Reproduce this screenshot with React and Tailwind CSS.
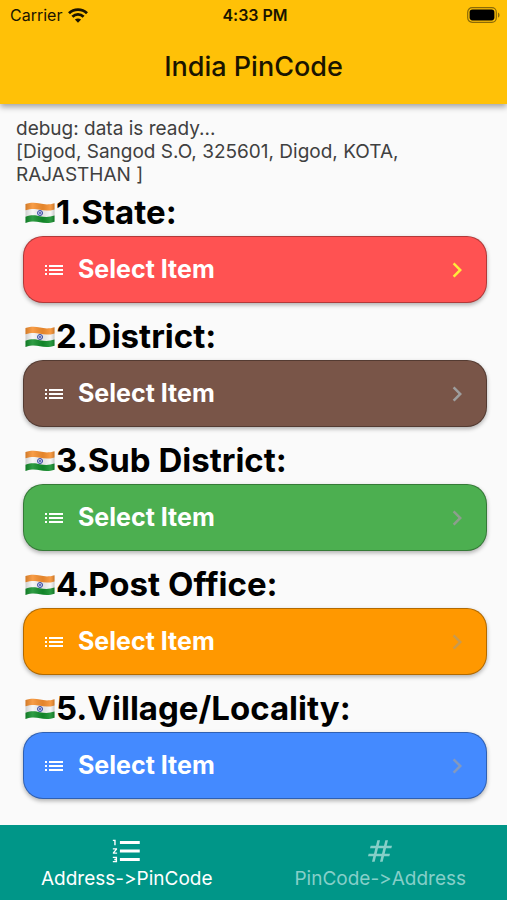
import { useState } from 'react';
import { MdChevronRight, MdFormatListNumbered, MdList, MdNumbers } from 'react-icons/md';

const fields = [
  { id: 'state', label: '1.State:', color: 'bg-[#ff5252]', arrow: 'text-[#ffeb3b]' },
  { id: 'district', label: '2.District:', color: 'bg-[#795548]', arrow: 'text-[#9e9e9e]' },
  { id: 'sub-district', label: '3.Sub District:', color: 'bg-[#4caf50]', arrow: 'text-[#8d9e8e]' },
  { id: 'post-office', label: '4.Post Office:', color: 'bg-[#ff9800]', arrow: 'text-[#c99a4f]' },
  { id: 'village', label: '5.Village/Locality:', color: 'bg-[#448aff]', arrow: 'text-[#8499bd]' },
];

const tabs = [
  { id: 'address', label: 'Address->PinCode', Icon: MdFormatListNumbered, size: 'size-[34px]' },
  { id: 'pincode', label: 'PinCode->Address', Icon: MdNumbers, size: 'size-8' },
];

function WifiIcon() {
  return (
    <svg viewBox="0 0 20 15" className="w-5 h-[15px]" fill="none" stroke="#1a1400" strokeWidth="2.8">
      <path d="M1 5.2C6 .4 14 .4 19 5.2" />
      <path d="M4.4 8.7c3.2-3 8-3 11.2 0" />
      <path d="M10 14.8 6.9 11.6c1.8-1.6 4.4-1.6 6.2 0z" fill="#1a1400" stroke="none" />
    </svg>
  );
}

function BatteryIcon() {
  return (
    <svg viewBox="0 0 33 16" className="w-[33px] h-4">
      <rect x="0.7" y="0.7" width="28.6" height="14.6" rx="4.5" fill="none" stroke="#8a6a08" strokeWidth="1.2" />
      <rect x="2.6" y="2.6" width="24.8" height="10.8" rx="2.8" fill="#000" />
      <path d="M31 5.4c2 .8 2 4.4 0 5.2z" fill="#8a6a08" />
    </svg>
  );
}

function IndiaFlag() {
  return (
    <svg viewBox="0 0 30 22" className="w-[30px] h-[22px] shrink-0">
      <defs>
        <linearGradient id="flagShade" x1="0" x2="1" y1="0" y2="0">
          <stop offset="0" stopColor="#000" stopOpacity="0.16" />
          <stop offset="0.25" stopColor="#fff" stopOpacity="0.12" />
          <stop offset="0.6" stopColor="#000" stopOpacity="0.08" />
          <stop offset="0.85" stopColor="#fff" stopOpacity="0.1" />
          <stop offset="1" stopColor="#000" stopOpacity="0.2" />
        </linearGradient>
      </defs>
      <path d="M.5 2C7 0 11 .8 15 1.600s9 1.400 14.500-.4v18.600c-6 2-10.500 1.200-14.500.4S6.500 18.800.5 21z" fill="#f5f5f5" />
      <path d="M.5 2C7 0 11 .8 15 1.600s9 1.400 14.500-.4v6.200c-5.500 1.800-10.500 1.200-14.500.4S7 6 .5 8.300z" fill="#f7902f" />
      <path d="M.5 14.700C7 12.300 11 13.400 15 14.200s9 1.200 14.500-.6v6.200c-6 2-10.500 1.200-14.500.4S6.500 18.800.5 21z" fill="#138f2b" />
      <circle cx="15" cy="11" r="2.500" fill="#d3d8f2" stroke="#3447ad" strokeWidth="1" />
      <circle cx="15" cy="11" r="0.900" fill="#3447ad" />
      <path d="M.5 2C7 0 11 .8 15 1.600s9 1.400 14.500-.4v18.600c-6 2-10.500 1.200-14.500.4S6.500 18.800.5 21z" fill="url(#flagShade)" />
    </svg>
  );
}

function SelectField({ id, label, color, arrow }) {
  return (
    <div className="flex flex-col gap-[3px]">
      <label htmlFor={id} className="flex items-center gap-px h-10 pl-0.5 text-[33px] font-bold text-black">
        <IndiaFlag />
        {label}
      </label>
      <div
        className={`flex items-center h-[67px] pl-[18px] pr-[14px] rounded-[20px] border border-black/30 shadow-[0_2px_4px_rgba(0,0,0,0.3)] ${color}`}
      >
        <MdList className="size-6 shrink-0 text-white" />
        <select
          id={id}
          className="appearance-none flex-1 min-w-0 ml-3 h-full bg-transparent text-[25px] font-bold text-white outline-none"
        >
          <option>Select Item</option>
        </select>
        <MdChevronRight className={`size-[30px] shrink-0 ${arrow}`} />
      </div>
    </div>
  );
}

function App() {
  const [activeTab, setActiveTab] = useState('address');

  return (
    <div className="min-h-screen flex flex-col bg-[#fafafa] font-[Inter,sans-serif] [font-variant-ligatures:no-contextual]">
      <header className="relative bg-[#ffc107] shadow-[0_3px_6px_rgba(0,0,0,0.35)]">
        <div className="grid grid-cols-3 items-center h-[30px] pl-[10px] pr-[7px] text-[#1a1400]">
          <div className="flex items-center gap-1.5 text-base">
            Carrier
            <WifiIcon />
          </div>
          <div className="text-center text-base font-semibold">4:33 PM</div>
          <div className="flex justify-end">
            <BatteryIcon />
          </div>
        </div>
        <h1 className="h-[74px] leading-[73px] text-center text-[27px] font-medium text-[#1a1400]">India PinCode</h1>
      </header>

      <main className="flex-1 pt-[13px] px-4">
        <p className="text-[19px] leading-[23px] text-[#404040]">
          debug: data is ready...
          <br />
          [Digod, Sangod S.O, 325601, Digod, KOTA, RAJASTHAN ]
        </p>
        <div className="flex flex-col gap-[14px] pt-[7px] pb-6 pl-[7px] pr-1">
          {fields.map((field) => (
            <SelectField key={field.id} {...field} />
          ))}
        </div>
      </main>

      <nav className="grid grid-cols-2 h-[75px] bg-[#009688]">
        {tabs.map(({ id, label, Icon, size }) => (
          <button
            key={id}
            type="button"
            onClick={() => setActiveTab(id)}
            className={`flex flex-col items-center pt-[9px] text-[19px] leading-[22px] ${
              activeTab === id ? 'text-white' : 'text-[#86cfc8]'
            }`}
          >
            <span className="flex items-center h-[34px]">
              <Icon className={size} />
            </span>
            {label}
          </button>
        ))}
      </nav>
    </div>
  );
}

export default App;
